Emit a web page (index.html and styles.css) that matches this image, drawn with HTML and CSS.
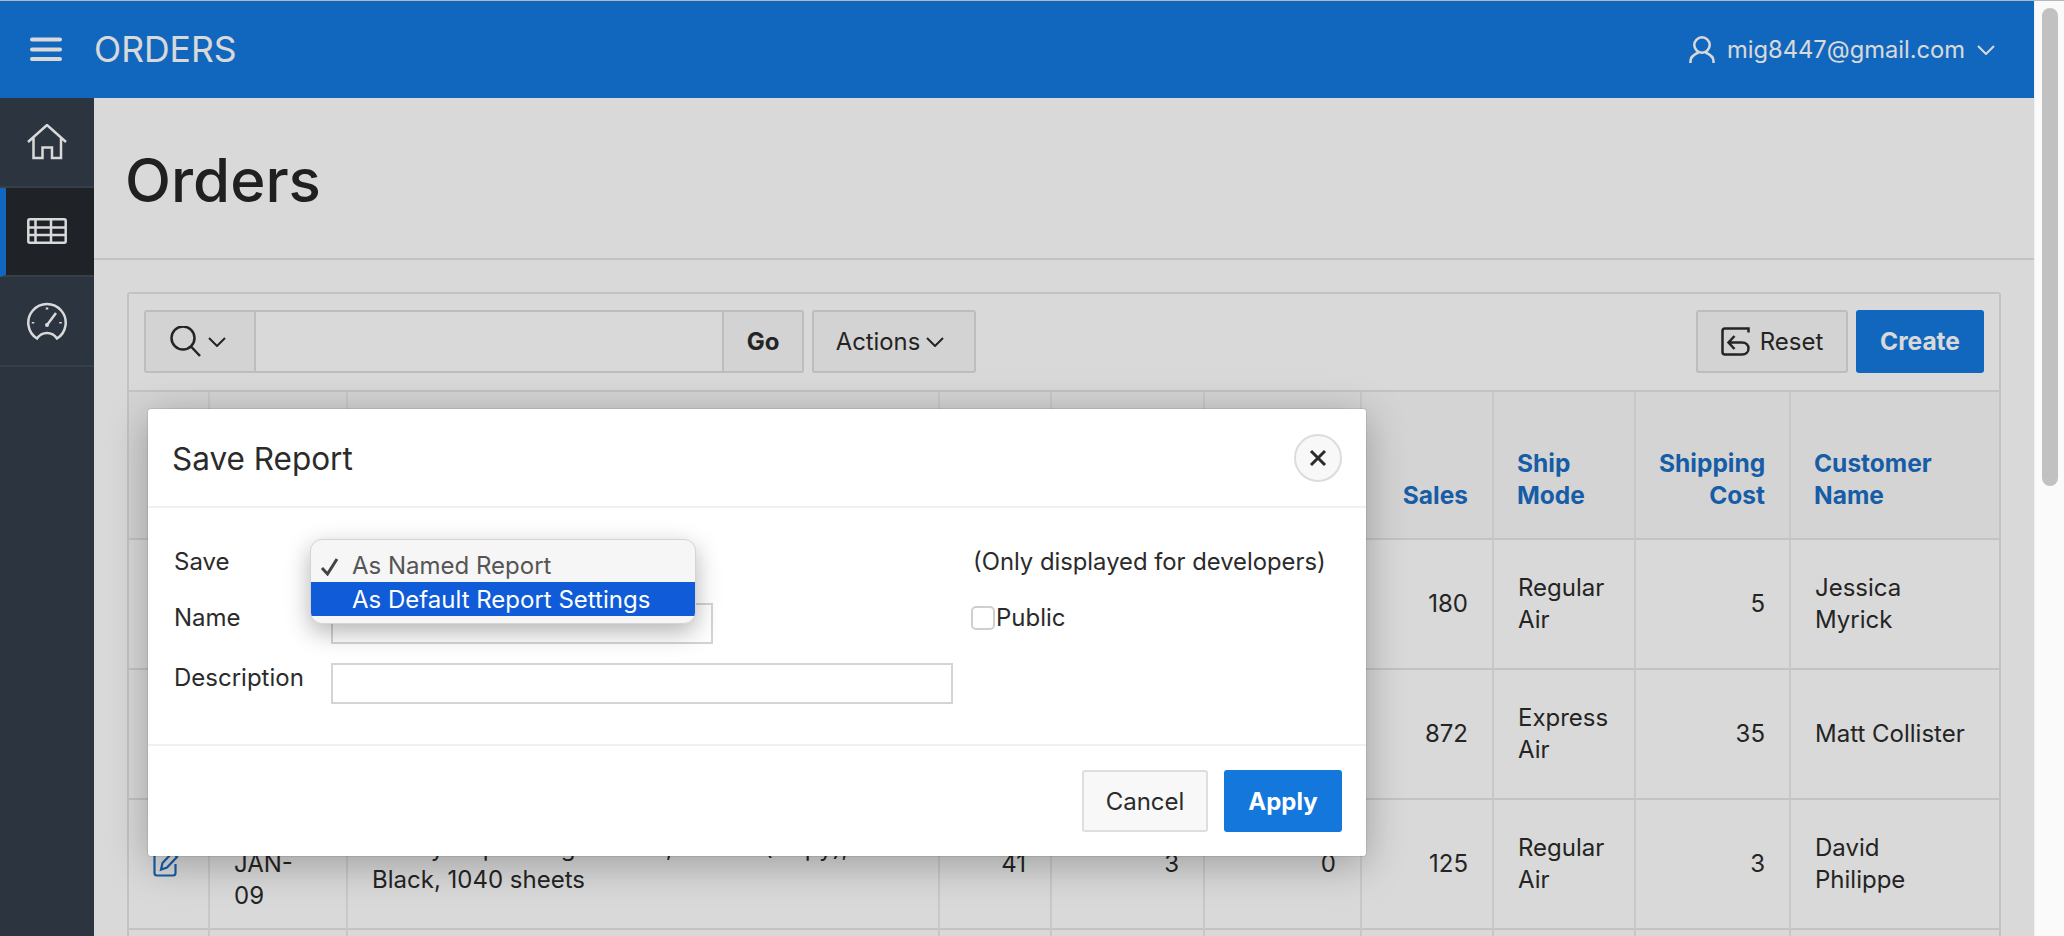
FILE: index.html
```html
<!DOCTYPE html>
<html lang="en">
<head>
	<meta charset="UTF-8">
	<title>Orders</title>
	<link rel="stylesheet" href="styles.css">
</head>
<body>
	<div class="page">
		<header class="topbar">
			<svg class="burger" width="32" height="28" viewBox="0 0 32 28"><path d="M2 3.500H30M2 13.500H30M2 23H30"/></svg>
			<span class="app-name">ORDERS</span>
			<div class="user">
				<svg width="26" height="28" viewBox="0 0 26 28"><circle cx="13" cy="9" r="7.7"/><path d="M1.5 27V25C1.500 20 6 18 9.500 16.500M24.500 27V25C24.500 20 20 18 16.500 16.500"/></svg>
				<span>mig8447@gmail.com</span>
				<svg class="chev" width="18" height="10" viewBox="0 0 18 10"><path d="M1 1L9 9L17 1"/></svg>
			</div>
		</header>
		<div class="layout">
			<nav class="sidebar">
				<a class="nav-item">
					<svg width="40" height="36" viewBox="0 0 40 36"><path d="M1 18L20 1L39 18M6.500 14V34H15.500V23.500H25V34H34V14"/></svg>
				</a>
				<a class="nav-item active">
					<svg width="40" height="26" viewBox="0 0 40 26"><rect x="1.300" y="1.300" width="37.400" height="23.400" rx="1.500"/><path d="M1 9.500H39M1 17H39M8.500 1V25M24 1V25"/></svg>
				</a>
				<a class="nav-item">
					<svg width="40" height="38" viewBox="0 0 40 38"><path d="M10 36.500A18.700 18.700 0 1 1 30 36.500C27 32 24 31 20 31C16 31 13 32 10 36.500Z"/><path d="M20 23L29 11M20 5.500V7.500M6 20V21.500M33.500 20V21.500"/><circle class="dot" cx="20" cy="23" r="2"/></svg>
				</a>
			</nav>
			<main class="content">
				<div class="title-bar"><h1>Orders</h1></div>
				<section class="region">
					<div class="toolbar">
						<div class="search">
							<button class="search-type">
								<svg width="32" height="32" viewBox="0 0 32 32"><circle cx="13" cy="12" r="11.500"/><path d="M21 20.500L30 30"/></svg>
								<svg class="chev" width="18" height="10" viewBox="0 0 18 10"><path d="M1 1L9 9L17 1"/></svg>
							</button>
							<input class="search-input" type="text">
							<button class="go">Go</button>
						</div>
						<button class="btn actions">Actions <svg class="chev" width="18" height="10" viewBox="0 0 18 10"><path d="M1 1L9 9L17 1"/></svg></button>
						<div class="spacer"></div>
						<button class="btn reset">
							<svg width="29" height="29" viewBox="0 0 29 29"><path d="M27.500 5.500V1.500H4C2.500 1.500 1.500 2.500 1.500 4V25C1.500 26.500 2.500 27.500 4 27.500H21C25 27.500 27.500 25 27.500 21.500C27.500 18 25 15.500 21 15.500H8M13.500 9L7.500 15.500L13.500 22"/></svg>
							Reset
						</button>
						<button class="btn create">Create</button>
					</div>
					<table class="report">
						<colgroup>
							<col class="c1"><col class="c2"><col class="c3"><col class="c4"><col class="c5">
							<col class="c6"><col class="c7"><col class="c8"><col class="c9"><col class="c10">
						</colgroup>
						<thead>
							<tr>
								<th></th><th></th><th></th><th></th><th></th><th></th>
								<th class="num">Sales</th>
								<th>Ship<br>Mode</th>
								<th class="num">Shipping<br>Cost</th>
								<th>Customer<br>Name</th>
							</tr>
						</thead>
						<tbody>
							<tr>
								<td></td><td></td><td></td><td></td><td></td><td></td>
								<td class="num">180</td><td>Regular<br>Air</td><td class="num">5</td><td>Jessica<br>Myrick</td>
							</tr>
							<tr>
								<td></td><td></td><td></td><td></td><td></td><td></td>
								<td class="num">872</td><td>Express<br>Air</td><td class="num">35</td><td>Matt Collister</td>
							</tr>
							<tr>
								<td class="edit">
									<svg width="26" height="26" viewBox="0 0 26 26"><path d="M11 3H4C2.500 3 1.500 4 1.500 5.500V22C1.500 23.500 2.500 24.500 4 24.500H20C21.500 24.500 22.500 23.500 22.500 22V13"/><path d="M8 18.500L9.500 12L19.500 1.500L24 6L14 16.500Z"/></svg>
								</td>
								<td>13-<br>JAN-<br>09</td>
								<td>Heavy Copier Legal Stock, 3-Hole (Copy),<br>Black, 1040 sheets</td>
								<td class="num">41</td><td class="num">3</td><td class="num">0</td>
								<td class="num">125</td><td>Regular<br>Air</td><td class="num">3</td><td>David<br>Philippe</td>
							</tr>
							<tr>
								<td></td><td></td><td></td><td></td><td></td><td></td><td></td><td></td><td></td><td></td>
							</tr>
						</tbody>
					</table>
				</section>
			</main>
		</div>
		<div class="overlay"></div>
		<div class="dialog">
			<div class="dialog-head">
				<h2>Save Report</h2>
				<button class="close">
					<svg width="18" height="18" viewBox="0 0 18 18"><path d="M2 2L16 16M16 2L2 16"/></svg>
				</button>
			</div>
			<div class="dialog-form">
				<label>Save</label>
				<div class="select-cell">
					<ul class="popup">
						<li><svg class="tick" width="20" height="18" viewBox="0 0 20 18"><path d="M2 10L7.500 16L17 1"/></svg>As Named Report</li>
						<li class="selected">As Default Report Settings</li>
					</ul>
				</div>
				<div class="note">(Only displayed for developers)</div>
				<label>Name</label>
				<input class="name-input" type="text">
				<label class="public"><input type="checkbox">Public</label>
				<label>Description</label>
				<input type="text">
			</div>
			<div class="dialog-foot">
				<button class="cancel">Cancel</button>
				<button class="apply">Apply</button>
			</div>
		</div>
	</div>
	<div class="scrollbar"><div class="thumb"></div></div>
</body>
</html>
```

FILE: styles.css
```css
* {box-sizing: border-box; margin: 0; padding: 0;}
body {display: flex; height: 936px; overflow: hidden; border-top: 1px solid #b4b8bc; background: #fff; font-family: Inter, "Liberation Sans", sans-serif; font-size: 24px; line-height: 32px; color: #2b2b2b;}
button, input {font: inherit; color: inherit;}
svg {fill: none; stroke: currentColor; stroke-width: 2.5; display: block;}
.chev {stroke-width: 2;}

.page {position: relative; width: 2034px; height: 935px; overflow: hidden; background: #fff;}
.scrollbar {width: 30px; background: #fafafa; border-left: 1px solid #f0f0f0; padding: 7px 5px 0 7px;}
.thumb {width: 16px; height: 478px; border-radius: 8px; background: #c1c1c1;}

.topbar {display: flex; align-items: center; height: 97px; padding: 0 39px 0 30px; background: #157ae0; color: #fff;}
.burger {stroke-width: 4; stroke-linecap: round;}
.app-name {margin-left: 32px; font-size: 35.500px;}
.user {display: flex; align-items: center; margin-left: auto; font-size: 23.700px; gap: 12px;}

.layout {display: flex;}
.sidebar {width: 94px; height: 838px; flex: none; background: #343e4a; color: #fff;}
.nav-item {display: flex; align-items: center; justify-content: center; height: 89.500px; border-bottom: 2px solid #3f4a56;}
.nav-item.active {background: #252a30; border-left: 6px solid #157ae0; padding-right: 6px;}
.dot {fill: currentColor; stroke: none;}

.content {flex: 1; min-width: 0;}
.title-bar {display: flex; align-items: center; height: 162px; padding: 4px 0 0 31px; border-bottom: 2px solid #e6e6e6;}
h1 {font-size: 60px; line-height: 72px; font-weight: 500; color: #262626;}

.region {margin: 32px 33px 0; border: 2px solid #e6e6e6; border-radius: 3px 3px 0 0;}
.toolbar {display: flex; gap: 8px; padding: 16px 15px 17px; border-bottom: 2px solid #e6e6e6;}
.spacer {flex: 1;}
.search {display: flex; width: 660px; height: 63px; border: 2px solid #dedede; border-radius: 3px;}
.search-type {display: flex; align-items: center; width: 110px; padding-left: 24px; gap: 6px; border: 0; border-right: 2px solid #dedede; background: #f8f8f8;}
.search-input {flex: 1; border: 0; background: #fff; outline: 0;}
.go {width: 80px; border: 0; border-left: 2px solid #dedede; background: #f8f8f8; font-weight: 700;}
.btn {display: flex; align-items: center; justify-content: center; height: 63px; border: 2px solid #dedede; border-radius: 3px; background: #f8f8f8;}
.actions {width: 164px; gap: 6px; padding-right: 8px; font-size: 23.800px;}
.reset {width: 152px; gap: 10px;}
.create {width: 128px; padding-bottom: 2px; border: 0; background: #157ae0; color: #fff; font-weight: 700; font-size: 24.500px;}

.report {width: 1870px; table-layout: fixed; border-collapse: separate; border-spacing: 0;}
.c1 {width: 81px;} .c2 {width: 138px;} .c3 {width: 592px;} .c4 {width: 112px;} .c5 {width: 153px;}
.c6 {width: 157px;} .c7 {width: 132px;} .c8 {width: 142px;} .c9 {width: 155px;} .c10 {width: 208px;}
th, td {padding: 0 24px 0 24px; border-right: 2px solid #ececec; border-bottom: 2px solid #e6e6e6; text-align: left;}
th {height: 148px; padding: 0 24px 27px 23px; vertical-align: bottom; background: #fafafa; color: #1a6ec4; font-weight: 700; font-size: 24.500px;}
td {height: 130px; vertical-align: middle;}
th:last-child, td:last-child {border-right: 0;}
.num {text-align: right;}
.edit {padding: 0 0 0 24px; color: #1a6ec4;}
.edit svg {stroke-width: 2.200;}

.overlay {position: absolute; inset: 0; background: rgba(0, 0, 0, 0.15);}
.dialog {position: absolute; left: 148px; top: 408px; width: 1218px; height: 447px; display: flex; flex-direction: column; background: #fff; border-radius: 3px; box-shadow: 0 0 0 1px rgba(0, 0, 0, 0.08), 0 8px 40px rgba(0, 0, 0, 0.28);}
.dialog-head {display: flex; align-items: center; justify-content: space-between; height: 99px; padding: 0 24px; border-bottom: 2px solid #f0f0f0;}
h2 {padding-top: 2px; font-size: 31.500px; line-height: 40px; font-weight: 400;}
.close {display: flex; align-items: center; justify-content: center; width: 48px; height: 48px; border: 2px solid #dcdcdc; border-radius: 50%; background: #f8f8f8;}
.close svg {stroke-width: 3;}

.dialog-form {display: grid; grid-template-columns: 137px 622px 1fr; grid-template-rows: 37px 41px 41px; gap: 19px 20px; padding: 39px 0 0 26px; flex: 1;}
.dialog-form label {line-height: 30px;}
.dialog-form input[type=text] {height: 41px; border: 2px solid #d4d4d4; background: #fff; outline: 0;}
.name-input {width: 382px;}
.note {line-height: 30px; font-size: 23.800px;}
.public {display: flex; align-items: center; align-self: start; margin-left: -2px;}
.public input {appearance: none; width: 24px; height: 24px; margin-right: 1px; border: 2px solid #cfcfcf; border-radius: 5px; background: #fff;}
.select-cell {position: relative;}
.popup {position: absolute; left: -21px; top: -8px; z-index: 1; width: 386px; height: 85px; padding-top: 8px; list-style: none; background: #f6f6f6; border: 1px solid #d4d4d4; border-radius: 12px; box-shadow: 0 8px 24px rgba(0, 0, 0, 0.3); color: #555; overflow: hidden;}
.popup li {display: flex; height: 34px; line-height: 36px; padding-left: 41px; position: relative;}
.popup .selected {background: #0f5bd8; color: #fff;}
.tick {position: absolute; left: 9px; top: 10px; color: #444; stroke-width: 3;}

.dialog-foot {display: flex; justify-content: flex-end; gap: 16px; padding: 24px; height: 112px; border-top: 2px solid #f0f0f0;}
.dialog-foot button {height: 62px; padding-top: 2px; border-radius: 3px;}
.cancel {width: 126px; border: 2px solid #dedede; background: #f8f8f8;}
.apply {width: 118px; border: 0; background: #1477dc; color: #fff; font-weight: 700;}
```
